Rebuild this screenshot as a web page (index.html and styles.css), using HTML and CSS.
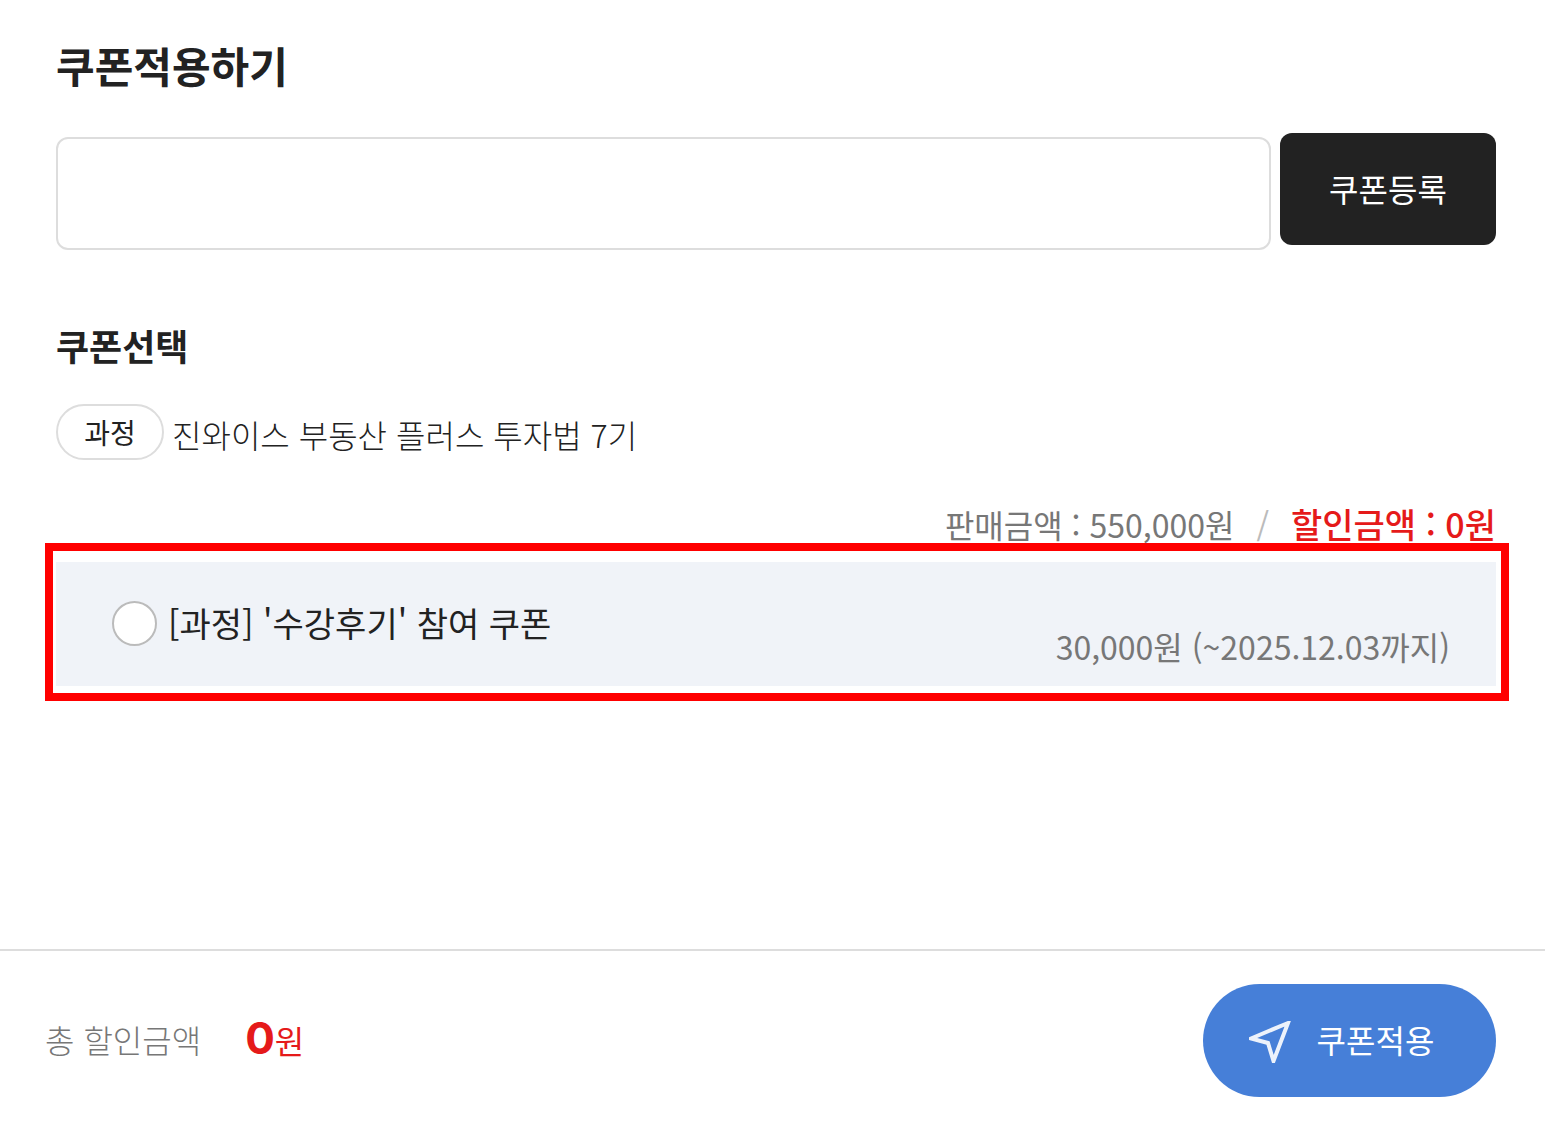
FILE: index.html
```
<!DOCTYPE html>
<html lang="ko">
<head>
    <meta charset="UTF-8">
    <meta name="viewport" content="width=device-width, initial-scale=1.0">
    <title>쿠폰적용하기</title>
    <link rel="stylesheet" href="styles.css">
</head>
<body>
    <main class="content">
        <h1>쿠폰적용하기</h1>
        <form class="coupon-form">
            <input type="text" class="coupon-input" aria-label="쿠폰번호">
            <button type="button" class="register-button">쿠폰등록</button>
        </form>

        <h2>쿠폰선택</h2>
        <div class="course">
            <span class="badge">과정</span>
            <span class="course-name">진와이스 부동산 플러스 투자법 7기</span>
        </div>
        <div class="price">
            <span>판매금액 : 550,000원</span>
            <span class="slash">/</span>
            <strong>할인금액 : 0원</strong>
        </div>
        <div class="coupon-frame">
            <div class="coupon">
                <input type="radio" name="coupon" id="coupon-1">
                <label for="coupon-1">[과정] '수강후기' 참여 쿠폰</label>
                <span class="coupon-info">30,000원 (~2025.12.03까지)</span>
            </div>
        </div>
    </main>
    <footer class="footer">
        <span class="total-label">총 할인금액</span>
        <span class="total"><strong>0</strong>원</span>
        <button type="button" class="apply-button">
            <svg width="42" height="42" viewBox="0 0 42 42" aria-hidden="true">
                <path d="M39 2 L2 17.5 L19 22 L24.500 40 Z" fill="none" stroke="#fff" stroke-opacity="0.9" stroke-width="4"/>
            </svg>
            쿠폰적용
        </button>
    </footer>
</body>
</html>
```
FILE: styles.css
```
* {
    box-sizing: border-box;
}
body {
    font-family: "Noto Sans CJK KR", sans-serif;
    font-size: 32px;
    line-height: 48px;
    color: #222;
    background-color: #fff;
    margin: 0;
    display: flex;
    flex-direction: column;
    min-height: 100vh;
}
input,
button {
    font: inherit;
    margin: 0;
}
button {
    border: none;
    color: #fff;
    cursor: pointer;
}
h1,
h2 {
    margin: 0;
    font-weight: 700;
}
h1 {
    font-size: 42px;
    line-height: 60px;
}
h2 {
    font-size: 36px;
    margin-top: 71px;
}
.content {
    flex: 1;
    padding: 35px 49px 40px 56px;
}
.coupon-form {
    display: flex;
    align-items: flex-start;
    gap: 9px;
    margin-top: 38px;
}
.coupon-input {
    flex: 1;
    min-width: 0;
    height: 113px;
    margin-top: 4px;
    padding: 0 28px;
    border: 2px solid #ddd;
    border-radius: 12px;
}
.register-button {
    width: 216px;
    height: 112px;
    padding: 0 0 2px;
    background-color: #222;
    border-radius: 12px;
}
.course {
    display: flex;
    align-items: center;
    gap: 8px;
    margin-top: 35px;
}
.badge {
    width: 108px;
    height: 56px;
    border: 2px solid #ddd;
    border-radius: 28px;
    font-size: 28px;
    line-height: 52px;
    text-align: center;
}
.course-name {
    padding-top: 4px;
    font-weight: 300;
}
.price {
    display: flex;
    justify-content: flex-end;
    gap: 22px;
    margin-top: 40px;
    color: #777;
}
.price .slash {
    color: #bbb;
}
.price strong {
    font-size: 34px;
    font-weight: 500;
    color: #e51a1a;
}
/* frame reaches past the column on both sides */
.coupon-frame {
    margin: -5px -13px 0 -11px;
    padding: 11px 5px 7px 3px;
    border: 8px solid #f00;
}
.coupon {
    display: flex;
    align-items: center;
    min-height: 124px;
    padding: 0 46px 2px 56px;
    background-color: #f0f3f8;
}
.coupon input {
    appearance: none;
    width: 45px;
    height: 45px;
    margin-right: 11px;
    border: 2px solid #bbb;
    border-radius: 50%;
    background-color: #fff;
}
.coupon input:checked {
    border: 12px solid #467fd8;
}
.coupon label {
    font-size: 34px;
}
.coupon-info {
    margin-left: auto;
    padding-top: 46px;
    color: #777;
}
.footer {
    display: flex;
    align-items: center;
    padding: 33px 49px 29px 45px;
    border-top: 2px solid #ddd;
}
.total-label,
.total {
    padding-bottom: 4px;
}
.total-label {
    font-weight: 300;
    color: #777;
}
.total {
    margin-left: 44px;
    color: #e51a1a;
}
.total strong {
    font-family: Inter, sans-serif;
    font-size: 44px;
    font-weight: 700;
}
.apply-button {
    display: flex;
    align-items: center;
    justify-content: center;
    gap: 26px;
    width: 293px;
    height: 113px;
    margin-left: auto;
    padding: 0 16px 3px 0;
    background-color: #467fd8;
    border-radius: 57px;
}
.apply-button svg {
    margin-top: 5px;
}
```
